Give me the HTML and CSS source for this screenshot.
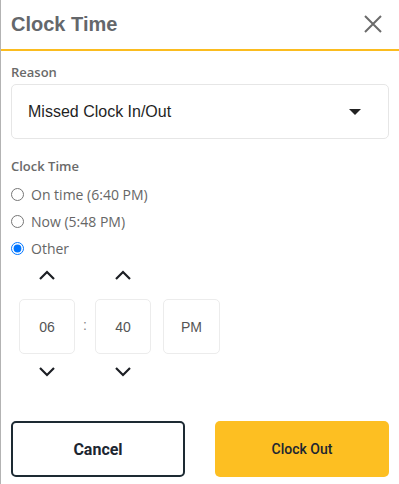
FILE: index.html
```html
<!DOCTYPE html>
<html lang="en">
<head>
  <meta charset="UTF-8">
  <title>Clock Time</title>
  <link rel="stylesheet" href="styles.css">
</head>
<body>
  <div class="modal">
    <div class="modal-header">
      <h2>Clock Time</h2>
      <button class="close-btn" aria-label="Close">
        <svg width="20" height="20" viewBox="0 0 20 20">
          <path d="M2 2 L18 18 M18 2 L2 18" stroke="#6b6b6b" stroke-width="2" fill="none"/>
        </svg>
      </button>
    </div>

    <div class="modal-body">
      <label class="field-label">Reason</label>
      <div class="select">
        <span>Missed Clock In/Out</span>
        <span class="caret"></span>
      </div>

      <label class="field-label">Clock Time</label>
      <div class="radios">
        <label class="radio-row"><input type="radio" name="time"> On time (6:40 PM)</label>
        <label class="radio-row"><input type="radio" name="time"> Now (5:48 PM)</label>
        <label class="radio-row"><input type="radio" name="time" checked> Other</label>
      </div>

      <div class="time-picker">
        <div class="time-col">
          <svg class="chev" width="18" height="10" viewBox="0 0 18 10"><polyline points="2,9 9,2 16,9"/></svg>
          <div class="time-box">06</div>
          <svg class="chev" width="18" height="10" viewBox="0 0 18 10"><polyline points="2,1 9,8 16,1"/></svg>
        </div>
        <div class="colon">:</div>
        <div class="time-col">
          <svg class="chev" width="18" height="10" viewBox="0 0 18 10"><polyline points="2,9 9,2 16,9"/></svg>
          <div class="time-box">40</div>
          <svg class="chev" width="18" height="10" viewBox="0 0 18 10"><polyline points="2,1 9,8 16,1"/></svg>
        </div>
        <div class="time-col ampm">
          <div class="time-box">PM</div>
        </div>
      </div>
    </div>

    <div class="modal-footer">
      <button class="btn btn-cancel">Cancel</button>
      <button class="btn btn-clockout">Clock Out</button>
    </div>
  </div>
</body>
</html>
```

FILE: styles.css
```css
* {
  margin: 0;
  padding: 0;
  box-sizing: border-box;
}

body {
  background-color: #b3b3b3;
  font-family: 'Liberation Sans', Arial, sans-serif;
  height: 484px;
  overflow: hidden;
}

.modal {
  background: #fff;
  margin-left: 1px;
  height: 484px;
}

.modal-header {
  height: 51px;
  display: flex;
  justify-content: space-between;
  align-items: flex-start;
  padding: 13px 16px 0 10px;
  border-bottom: 2px solid #fbbc1f;
}

.modal-header h2 {
  font-size: 20px;
  font-weight: bold;
  color: #64676b;
  line-height: 23px;
}

.close-btn {
  background: none;
  border: none;
  margin-top: 1px;
  cursor: pointer;
}

.modal-body {
  padding: 12px 10px 0 10px;
}

.field-label {
  display: block;
  font-family: 'Open Sans', sans-serif;
  font-size: 13px;
  font-weight: 600;
  color: #6a6a6a;
  line-height: 18px;
}

.select {
  height: 55px;
  margin: 3px 0 18px;
  border: 1px solid #e6e6e6;
  border-radius: 5px;
  display: flex;
  align-items: center;
  justify-content: space-between;
  padding: 0 27px 0 16px;
  font-size: 16px;
  color: #1f1f1f;
}

.caret {
  width: 0;
  height: 0;
  border-left: 6px solid transparent;
  border-right: 6px solid transparent;
  border-top: 6px solid #222;
}

.radios {
  margin-top: 6px;
}

.radio-row {
  display: flex;
  align-items: center;
  gap: 7px;
  height: 27px;
  font-family: 'Open Sans', sans-serif;
  font-size: 14px;
  color: #666;
}

.radio-row input {
  margin: 0;
  width: 13px;
  height: 13px;
}

.time-picker {
  display: flex;
  align-items: flex-start;
  padding-left: 8px;
  margin-top: 8px;
}

.time-col {
  display: flex;
  flex-direction: column;
  align-items: center;
  width: 56px;
}

.chev {
  fill: none;
  stroke: #1c1f24;
  stroke-width: 2.2;
}

.time-col .chev:first-child {
  margin-bottom: 19px;
}

.time-col .chev:last-child {
  margin-top: 13px;
}

.time-box {
  width: 56px;
  height: 55px;
  border: 1px solid #ececec;
  border-radius: 5px;
  display: flex;
  align-items: center;
  justify-content: center;
  font-size: 14px;
  color: #555;
}

.colon {
  width: 20px;
  text-align: center;
  font-size: 14px;
  color: #888;
  margin-top: 47px;
}

.ampm {
  margin-left: 12px;
  margin-top: 29px;
  width: 57px;
}

.ampm .time-box {
  width: 57px;
}

.modal-footer {
  display: flex;
  gap: 30px;
  padding: 0 10px;
  margin-top: 44px;
}

.btn {
  width: 174px;
  height: 56px;
  border-radius: 5px;
  font-family: Roboto, sans-serif;
  color: #1c2631;
  cursor: pointer;
}

.btn-cancel {
  background: #fff;
  border: 2px solid #1d2a33;
  font-size: 16px;
  font-weight: bold;
}

.btn-clockout {
  background: #fdbf22;
  border: none;
  font-size: 14px;
  font-weight: 500;
}
```
